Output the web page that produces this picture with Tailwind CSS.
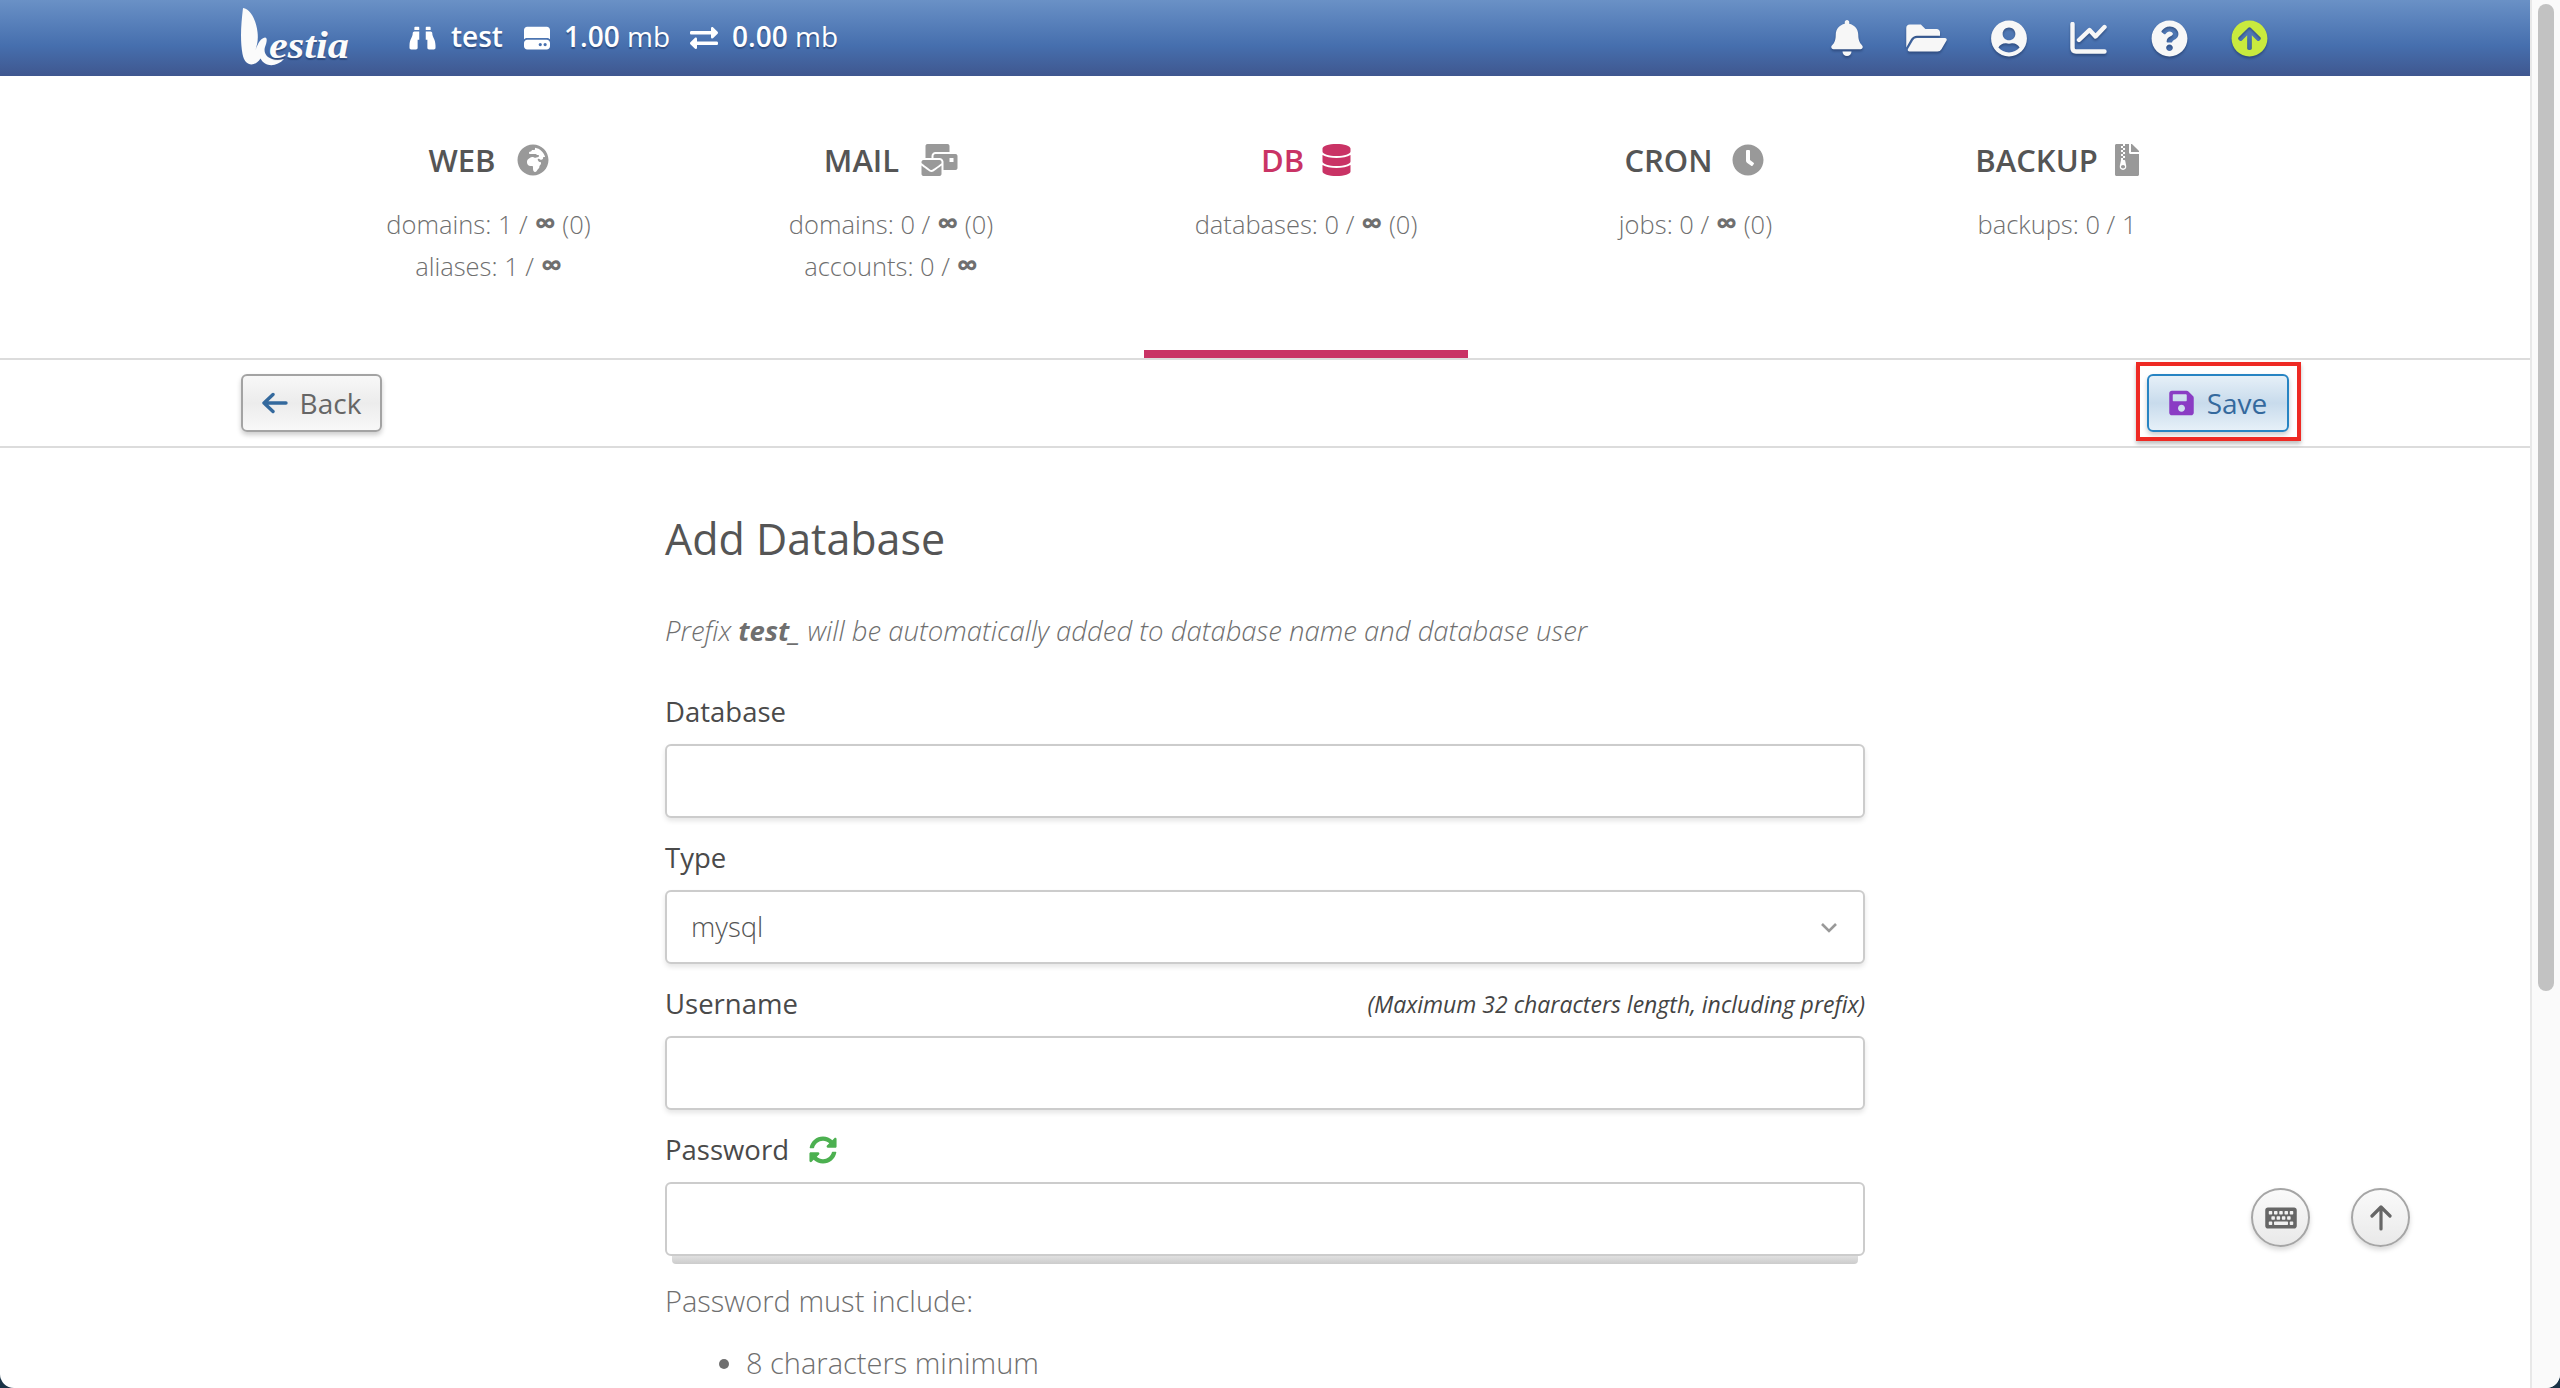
<!DOCTYPE html>
<html lang="en">
<head>
  <meta charset="UTF-8" />
  <title>Add Database</title>
  <script src="https://cdn.jsdelivr.net/npm/@tailwindcss/browser@4"></script>
</head>
<body class="h-screen overflow-hidden bg-[#1b3347] font-['Open_Sans',sans-serif] text-[#666]">
<div class="relative flex h-screen overflow-hidden rounded-b-[14px] bg-white">
  <div class="relative w-[2530px] shrink-0">

    <!-- Top bar -->
    <div class="h-[76px] bg-linear-to-b from-[#6a91c6] via-[#466fae] via-60% to-[#3f578f] flex items-center pl-[240px] pr-[262px] text-white [text-shadow:0_2px_1px_rgba(20,40,80,.45)]">
      <svg class="w-[112px] h-[76px] mr-[57px] shrink-0" viewBox="0 0 112 76">
        <path fill="#fbfbfb" d="M3 8C10 9 16 19 17.500 32C18.500 40 17 45 15.500 50C18 43 21 38 25 37.500C28 37.500 26.500 43 25 47C22.500 55 30 62 44 59C37 67 25 67.500 20.500 58.500C15 67 5 67 2.500 54C0 40 1 25 3 8Z"/>
        <text x="29" y="58" textLength="80" lengthAdjust="spacingAndGlyphs" fill="#fbfbfb" font-family="'Liberation Serif',serif" font-style="italic" font-weight="700" font-size="37">estia</text>
      </svg>
      <svg class="w-[27px] h-[26px] mr-[15px]" viewBox="0 0 512 512" fill="currentColor"><path d="M416 48c0-8.84-7.16-16-16-16h-64c-8.84 0-16 7.16-16 16v48h96V48zM63.91 159.99C61.4 253.84 3.46 274.22 0 404v44c0 17.67 14.33 32 32 32h96c17.67 0 32-14.33 32-32V288h32V128H95.84c-17.63 0-31.45 14.37-31.93 31.99zm384.18 0c-.48-17.62-14.3-31.99-31.93-31.99H320v160h32v160c0 17.67 14.33 32 32 32h96c17.67 0 32-14.33 32-32v-44c-3.46-129.78-61.4-150.16-63.91-244.01zM176 32h-64c-8.84 0-16 7.16-16 16v48h96V48c0-8.84-7.16-16-16-16z"/></svg>
      <span class="mb-[4px] text-[28px] font-semibold w-[72px]">test</span>
      <svg class="w-[28px] h-[26px] mr-[13px]" viewBox="0 0 512 512" fill="currentColor"><path d="M0 96C0 60.7 28.7 32 64 32H448c35.3 0 64 28.7 64 64V280.4c-17-15.2-39.4-24.4-64-24.4H64c-24.6 0-47 9.2-64 24.4V96zM64 288H448c35.3 0 64 28.7 64 64v64c0 35.3-28.7 64-64 64H64c-35.3 0-64-28.7-64-64V352c0-35.3 28.7-64 64-64zM320 416a32 32 0 1 0 0-64 32 32 0 1 0 0 64zm128-32a32 32 0 1 0 -64 0 32 32 0 1 0 64 0z"/></svg>
      <span class="mb-[4px] text-[28px] w-[126px]"><span class="font-semibold">1.00</span> <span>mb</span></span>
      <svg class="w-[28px] h-[28px] mr-[14px]" viewBox="0 0 512 512" fill="currentColor"><path d="M0 168v-16c0-13.255 10.745-24 24-24h360V80c0-21.367 25.899-32.042 40.971-16.971l80 80c9.372 9.373 9.372 24.569 0 33.941l-80 80C409.956 271.982 384 261.456 384 240v-48H24c-13.255 0-24-10.745-24-24zm488 152H128v-48c0-21.314-25.862-32.08-40.971-16.971l-80 80c-9.372 9.373-9.372 24.569 0 33.941l80 80C102.057 463.997 128 453.437 128 432v-48h360c13.255 0 24-10.745 24-24v-16c0-13.255-10.745-24-24-24z"/></svg>
      <span class="mb-[4px] text-[28px]"><span class="font-semibold">0.00</span> <span>mb</span></span>

      <div class="ml-auto flex items-center gap-[43.5px] text-[#f7f7f7] drop-shadow-[0_2px_1px_rgba(20,40,80,.45)]">
        <svg class="w-[32px] h-[36px]" viewBox="0 0 448 512" fill="currentColor"><path d="M224 512c35.32 0 63.97-28.65 63.97-64H160.03c0 35.35 28.65 64 63.97 64zm215.39-149.71c-19.32-20.76-55.47-51.99-55.47-154.29 0-77.7-54.48-139.9-127.94-155.16V32c0-17.67-14.32-32-31.98-32s-31.98 14.33-31.98 32v20.84C118.56 68.1 64.08 130.3 64.08 208c0 102.3-36.15 133.53-55.47 154.29-6 6.45-8.66 14.16-8.61 21.71.11 16.4 12.98 32 32.1 32h383.8c19.12 0 32-15.6 32.1-32 .05-7.55-2.61-15.27-8.61-21.71z"/></svg>
        <svg class="w-[41px] h-[36px]" viewBox="0 0 576 512" fill="currentColor"><path d="M572.694 292.093L500.27 416.248A63.997 63.997 0 0 1 444.989 448H45.025c-18.523 0-30.064-20.093-20.731-36.093l72.424-124.155A64 64 0 0 1 152 256h399.964c18.523 0 30.064 20.093 20.73 36.093zM152 224h328v-48c0-26.51-21.49-48-48-48H272l-64-64H48C21.49 64 0 85.49 0 112v278.046l69.077-118.418C86.214 242.25 117.989 224 152 224z"/></svg>
        <svg class="w-[36px] h-[37px]" viewBox="0 0 496 512" fill="currentColor"><path d="M248 8C111 8 0 119 0 256s111 248 248 248 248-111 248-248S385 8 248 8zm0 96c48.6 0 88 39.4 88 88s-39.4 88-88 88-88-39.4-88-88 39.4-88 88-88zm0 344c-58.7 0-111.3-26.6-146.5-68.2 18.8-35.4 55.6-59.8 98.5-59.8 2.4 0 4.8.4 7.1 1.1 13 4.2 26.6 6.9 40.9 6.9 14.3 0 28-2.7 40.9-6.9 2.3-.7 4.7-1.1 7.1-1.1 42.9 0 79.7 24.4 98.5 59.8C359.3 421.4 306.7 448 248 448z"/></svg>
        <svg class="w-[37px] h-[32px]" viewBox="0 0 37 32" fill="none" stroke="currentColor" stroke-width="4.4" stroke-linecap="round" stroke-linejoin="round"><path d="M2.5 2V26Q2.5 29.5 6 29.5H34.5"/><path d="M9 18L19.5 8L25.5 14.5L34.5 5"/></svg>
        <svg class="w-[37px] h-[37px]" viewBox="0 0 512 512" fill="currentColor"><path d="M504 256c0 136.997-111.043 248-248 248S8 392.997 8 256C8 119.083 119.043 8 256 8s248 111.083 248 248zM262.655 90c-54.497 0-89.255 22.957-116.549 63.758-3.536 5.286-2.353 12.415 2.715 16.258l34.699 26.31c5.205 3.947 12.621 3.008 16.665-2.122 17.864-22.658 30.113-35.797 57.303-35.797 20.429 0 45.698 13.148 45.698 32.958 0 14.976-12.363 22.667-32.534 33.976C247.128 238.528 216 254.941 216 296v4c0 6.627 5.373 12 12 12h56c6.627 0 12-5.373 12-12v-1.333c0-28.462 83.186-29.647 83.186-106.667 0-58.002-60.165-102-116.531-102zM256 338c-25.365 0-46 20.635-46 46 0 25.364 20.635 46 46 46s46-20.636 46-46c0-25.365-20.635-46-46-46z"/></svg>
        <svg class="w-[37px] h-[37px] text-[#c9ea3e]" viewBox="0 0 512 512" fill="currentColor"><path d="M8 256C8 119 119 8 256 8s248 111 248 248-111 248-248 248S8 393 8 256zm143.6 28.9l72.4-75.5V392c0 13.3 10.7 24 24 24h16c13.3 0 24-10.7 24-24V209.4l72.4 75.5c9.3 9.7 24.8 9.9 34.3.4l10.9-11c9.4-9.4 9.4-24.6 0-33.9L273 107.7c-9.4-9.4-24.6-9.4-33.9 0L106.3 240.4c-9.4 9.4-9.4 24.6 0 33.9l10.9 11c9.6 9.5 25.1 9.3 34.4-.4z"/></svg>
      </div>
    </div>

    <!-- Tabs -->
    <div class="h-[284px] border-b-2 border-[#dcdcdc] flex pl-[339px] text-center text-[25.500px] font-light leading-[42px] text-[#6f6f6f]">
      <div class="w-[299px] pt-[68px]">
        <div class="h-[32px] flex items-center justify-center gap-[21px] text-[31px] font-semibold text-[#555]">WEB
          <svg class="w-[32px] h-[32px] text-[#999]" viewBox="0 0 496 512" fill="currentColor"><path d="M248 8C111.03 8 0 119.03 0 256s111.03 248 248 248 248-111.03 248-248S384.97 8 248 8zm160 215.5v6.93c0 5.87-3.32 11.24-8.57 13.86l-15.39 7.7a15.485 15.485 0 0 1-15.53-.97l-18.21-12.14a15.52 15.52 0 0 0-13.5-1.81l-2.65.88c-9.7 3.23-13.66 14.79-7.99 23.3l13.24 19.86c2.87 4.31 7.71 6.9 12.89 6.9h8.21c8.56 0 15.5 6.94 15.5 15.5v11.34c0 3.35-1.09 6.62-3.1 9.3l-18.74 24.98c-1.42 1.9-2.39 4.1-2.83 6.43l-4.3 22.83c-.62 3.29-2.29 6.29-4.76 8.56a159.608 159.608 0 0 0-25 29.16l-13.03 19.55a27.756 27.756 0 0 1-23.09 12.36c-10.51 0-20.12-5.94-24.82-15.34a78.902 78.902 0 0 1-8.33-35.29V367.5c0-8.56-6.94-15.5-15.5-15.5h-25.88c-14.49 0-28.38-5.76-38.63-16a54.659 54.659 0 0 1-16-38.63v-14.06c0-17.19 8.1-33.38 21.85-43.7l27.58-20.69a54.663 54.663 0 0 1 32.78-10.93h.89c8.48 0 16.85 1.97 24.43 5.77l14.72 7.36c3.68 1.84 7.93 2.14 11.83.84l47.31-15.77c6.33-2.11 10.6-8.03 10.6-14.7 0-8.56-6.94-15.5-15.5-15.5h-10.09c-4.11 0-8.05-1.63-10.96-4.54l-6.92-6.92a15.493 15.493 0 0 0-10.96-4.54H199.5c-8.56 0-15.5-6.94-15.5-15.5v-4.4c0-7.11 4.84-13.31 11.74-15.04l14.45-3.61c3.74-.94 7-3.23 9.14-6.44l8.08-12.11c2.87-4.31 7.71-6.9 12.89-6.9h24.21c8.56 0 15.5-6.94 15.5-15.5v-21.7C359.23 71.63 422.86 131.02 441.93 208H423.5c-8.56 0-15.5 6.94-15.5 15.5z"/></svg>
        </div>
        <p class="mt-[27px]">domains: 1 / <b class="font-bold text-[30px] leading-[30px]">∞</b> (0)</p>
        <p>aliases: 1 / <b class="font-bold text-[30px] leading-[30px]">∞</b></p>
      </div>
      <div class="w-[306px] ml-[100px] pt-[68px]">
        <div class="h-[32px] flex items-center justify-center gap-[22px] text-[31px] font-semibold text-[#555]">MAIL
          <svg class="w-[37px] h-[32px] text-[#999]" viewBox="0 0 576 512" fill="currentColor"><path d="M160 448c-25.6 0-51.2-22.4-64-32-64-44.8-83.2-60.8-96-70.4V480c0 17.67 14.33 32 32 32h256c17.67 0 32-14.33 32-32V345.6c-12.8 9.6-32 25.6-96 70.4-12.8 9.6-38.4 32-64 32zm128-192H32c-17.67 0-32 14.33-32 32v16c25.6 19.2 22.4 19.2 115.2 86.4 9.6 6.4 28.8 25.6 44.8 25.6s35.2-19.2 44.8-22.4c92.8-67.2 89.6-67.2 115.2-86.4V288c0-17.67-14.33-32-32-32zm256-96H224c-17.67 0-32 14.33-32 32v32h96c33.21 0 60.59 25.42 63.71 57.82l.29-.22V416h192c17.67 0 32-14.33 32-32V192c0-17.67-14.33-32-32-32zm-32 128h-64v-64h64v64zm-352-96c0-35.29 28.71-64 64-64h224V32c0-17.67-14.33-32-32-32H96C78.33 0 64 14.33 64 32v192h96v-32z"/></svg>
        </div>
        <p class="mt-[27px]">domains: 0 / <b class="font-bold text-[30px] leading-[30px]">∞</b> (0)</p>
        <p>accounts: 0 / <b class="font-bold text-[30px] leading-[30px]">∞</b></p>
      </div>
      <div class="w-[324px] ml-[100px] pt-[68px] h-[282px] border-b-[8px] border-[#c93365]">
        <div class="h-[32px] flex items-center justify-center gap-[18px] text-[31px] font-semibold text-[#c93365]">DB
          <svg class="w-[29px] h-[32px]" viewBox="0 0 448 512" fill="currentColor"><path d="M448 73.143v45.714C448 159.143 347.667 192 224 192S0 159.143 0 118.857V73.143C0 32.857 100.333 0 224 0s224 32.857 224 73.143zM448 176v102.857C448 319.143 347.667 352 224 352S0 319.143 0 278.857V176c48.125 33.143 136.208 48.572 224 48.572S399.874 209.143 448 176zm0 160v102.857C448 479.143 347.667 512 224 512S0 479.143 0 438.857V336c48.125 33.143 136.208 48.572 224 48.572S399.874 369.143 448 336z"/></svg>
        </div>
        <p class="mt-[27px]">databases: 0 / <b class="font-bold text-[30px] leading-[30px]">∞</b> (0)</p>
      </div>
      <div class="w-[255px] ml-[100px] pt-[68px]">
        <div class="h-[32px] flex items-center justify-center gap-[19px] text-[31px] font-semibold text-[#555] pr-[3px]">CRON
          <svg class="w-[32px] h-[32px] text-[#999]" viewBox="0 0 512 512" fill="currentColor"><path d="M256,8C119,8,8,119,8,256S119,504,256,504,504,393,504,256,393,8,256,8Zm92.49,313h0l-20,25a16,16,0,0,1-22.49,2.5h0l-67-49.72a40,40,0,0,1-15-31.23V112a16,16,0,0,1,16-16h32a16,16,0,0,1,16,16V256l58,42.5A16,16,0,0,1,348.49,321Z"/></svg>
        </div>
        <p class="mt-[27px]">jobs: 0 / <b class="font-bold text-[30px] leading-[30px]">∞</b> (0)</p>
      </div>
      <div class="w-[250px] ml-[109px] pt-[68px]">
        <div class="h-[32px] flex items-center justify-center gap-[17px] text-[31px] font-semibold text-[#555]">BACKUP
          <svg class="w-[24px] h-[32px] text-[#999]" viewBox="0 0 384 512" fill="currentColor"><path d="M377 105L279.1 7c-4.5-4.5-10.6-7-17-7H256v128h128v-6.1c0-6.3-2.5-12.4-7-16.9zM128.4 336c-17.9 0-32.4 12.1-32.4 27 0 15 14.6 27 32.5 27s32.4-12.1 32.4-27-14.6-27-32.5-27zM224 136V0h-63.6v32h-32V0H24C10.7 0 0 10.7 0 24v464c0 13.3 10.7 24 24 24h336c13.3 0 24-10.7 24-24V160H248c-13.2 0-24-10.8-24-24zM95.9 32h32v32h-32zm32.3 384c-33.2 0-58-30.4-51.4-62.9L96.4 256v-32h32v-32h-32v-32h32v-32h-32V96h32V64h32v32h-32v32h32v32h-32v32h32v32h-32v32h22.1c5.7 0 10.7 4.1 11.8 9.7l17.3 87.7c6.4 32.4-18.4 62.6-51.4 62.6z"/></svg>
        </div>
        <p class="mt-[27px]">backups: 0 / 1</p>
      </div>
    </div>

    <!-- Toolbar -->
    <div class="h-[88px] border-b-2 border-[#dcdcdc] flex items-center justify-between pl-[241px] pr-[241px] text-[28px]">
      <button class="h-[58px] w-[141px] flex items-center justify-center gap-[12px] rounded-[6px] border-2 border-[#a3a3a3] bg-linear-to-b from-[#f8f8f8] via-[#ececec] to-[#f8f8f8] shadow-[0_3px_5px_rgba(0,0,0,.2)] text-[#666] leading-[50px]">
        <svg class="w-[26px] h-[22px] text-[#34699d]" viewBox="0 0 26 22" fill="none" stroke="currentColor" stroke-width="3.4" stroke-linecap="round" stroke-linejoin="round"><path d="M2 11H24M11 2.5L2 11L11 19.5"/></svg>
        Back
      </button>
      <div class="relative">
        <button class="h-[58px] w-[142px] flex items-center justify-center gap-[13px] rounded-[6px] border-2 border-[#2784c3] bg-linear-to-b from-[#e6f0f8] via-[#c8dbec] to-[#e6f0f8] shadow-[0_3px_5px_rgba(0,0,0,.2)] text-[#34699d] leading-[50px]">
          <svg class="w-[25px] h-[28px] text-[#8a3cc4]" viewBox="0 0 448 512" fill="currentColor"><path d="M433.941 129.941l-83.882-83.882A48 48 0 0 0 316.118 32H48C21.49 32 0 53.49 0 80v352c0 26.51 21.49 48 48 48h352c26.51 0 48-21.49 48-48V163.882a48 48 0 0 0-14.059-33.941zM224 416c-35.346 0-64-28.654-64-64 0-35.346 28.654-64 64-64s64 28.654 64 64c0 35.346-28.654 64-64 64zm96-304.52V212c0 6.627-5.373 12-12 12H76c-6.627 0-12-5.373-12-12V108c0-6.627 5.373-12 12-12h228.52c3.183 0 6.235 1.264 8.485 3.515l3.48 3.48A11.996 11.996 0 0 1 320 111.48z"/></svg>
          Save
        </button>
        <div class="absolute left-[-11px] right-[-12px] top-[-12px] bottom-[-9px] border-4 border-[#ee2a24] shadow-[0_3px_4px_rgba(0,0,0,.25)]"></div>
      </div>
    </div>

    <!-- Form -->
    <div class="ml-[665px] w-[1200px] text-[27.5px]">
      <h1 class="mt-[63px] h-[56px] leading-[56px] text-[43px] font-normal text-[#555]">Add Database</h1>
      <p class="mt-[44px] h-[40px] leading-[40px] italic font-light text-[#6f6f6f]">Prefix <b class="font-bold">test_</b> will be automatically added to database name and database user</p>

      <label class="mt-[45px] h-[32px] leading-[32px] block font-medium text-[#4a4a4a]">Database</label>
      <input class="mt-[16px] block w-full h-[74px] rounded-[6px] border-2 border-[#ccc] bg-white shadow-[0_3px_5px_rgba(0,0,0,.1)]" />

      <label class="mt-[24px] h-[32px] leading-[32px] block font-medium text-[#4a4a4a]">Type</label>
      <div class="relative mt-[16px]">
        <select class="appearance-none block w-full h-[74px] pl-[24px] rounded-[6px] border-2 border-[#ccc] bg-white shadow-[0_3px_5px_rgba(0,0,0,.1)] font-light text-[#555]"><option>mysql</option></select>
        <svg class="absolute right-[28px] top-[33px] w-[16px] h-[10px] text-[#999]" viewBox="0 0 16 10" fill="none" stroke="currentColor" stroke-width="2.6"><path d="M1 1L8 8L15 1"/></svg>
      </div>

      <div class="mt-[24px] h-[32px] flex items-center justify-between">
        <label class="font-medium text-[#4a4a4a]">Username</label>
        <span class="text-[23px] italic font-medium text-[#444]">(Maximum 32 characters length, including prefix)</span>
      </div>
      <input class="mt-[16px] block w-full h-[74px] rounded-[6px] border-2 border-[#ccc] bg-white shadow-[0_3px_5px_rgba(0,0,0,.1)]" />

      <div class="mt-[24px] h-[32px] flex items-center gap-[20px]">
        <label class="font-medium text-[#4a4a4a]">Password</label>
        <svg class="w-[28px] h-[28px] text-[#4cb050]" viewBox="0 0 512 512" fill="currentColor"><path d="M370.72 133.28C339.458 104.008 298.888 87.962 255.848 88c-77.458.068-144.328 53.178-162.791 126.85-1.344 5.363-6.122 9.15-11.651 9.15H24.103c-7.498 0-13.194-6.807-11.807-14.176C33.933 94.924 134.813 8 256 8c66.448 0 126.791 26.136 171.315 68.685L463.03 40.97C478.149 25.851 504 36.559 504 57.941V192c0 13.255-10.745 24-24 24H345.941c-21.382 0-32.09-25.851-16.971-40.971l41.75-41.749zM32 296h134.059c21.382 0 32.09 25.851 16.971 40.971l-41.75 41.75c31.262 29.273 71.835 45.319 114.876 45.28 77.418-.07 144.315-53.144 162.787-126.849 1.344-5.363 6.122-9.15 11.651-9.15h57.304c7.498 0 13.194 6.807 11.807 14.176C478.067 417.076 377.187 504 256 504c-66.448 0-126.791-26.136-171.315-68.685L48.97 471.03C33.851 486.149 8 475.441 8 454.059V320c0-13.255 10.745-24 24-24z"/></svg>
      </div>
      <div class="relative mt-[16px]">
        <input class="relative z-10 block w-full h-[74px] rounded-[6px] border-2 border-[#ccc] bg-white" />
        <div class="mx-[7px] h-[8px] bg-linear-to-b from-[#e0e0e0] to-[#cccccc] rounded-b-[4px]"></div>
      </div>

      <p class="mt-[17px] h-[40px] leading-[40px] text-[29px] font-light text-[#6f6f6f]">Password must include:</p>
      <ul class="mt-[22px] pl-[81px] list-disc text-[29px] font-light text-[#6f6f6f] leading-[40px]">
        <li>8 characters minimum</li>
      </ul>
    </div>

    <!-- Floating buttons -->
    <button class="absolute left-[2251px] top-[1188px] w-[59px] h-[59px] rounded-full border-2 border-[#a5a5a5] bg-linear-to-b from-[#fafafa] to-[#e9e9e9] shadow-[0_3px_5px_rgba(0,0,0,.15)] flex items-center justify-center">
      <svg class="w-[32px] h-[28px] text-[#666]" viewBox="0 0 576 512" fill="currentColor"><path d="M528 448H48c-26.51 0-48-21.49-48-48V112c0-26.51 21.49-48 48-48h480c26.51 0 48 21.49 48 48v288c0 26.51-21.49 48-48 48zM128 180v-40c0-6.627-5.373-12-12-12H76c-6.627 0-12 5.373-12 12v40c0 6.627 5.373 12 12 12h40c6.627 0 12-5.373 12-12zm96 0v-40c0-6.627-5.373-12-12-12h-40c-6.627 0-12 5.373-12 12v40c0 6.627 5.373 12 12 12h40c6.627 0 12-5.373 12-12zm96 0v-40c0-6.627-5.373-12-12-12h-40c-6.627 0-12 5.373-12 12v40c0 6.627 5.373 12 12 12h40c6.627 0 12-5.373 12-12zm96 0v-40c0-6.627-5.373-12-12-12h-40c-6.627 0-12 5.373-12 12v40c0 6.627 5.373 12 12 12h40c6.627 0 12-5.373 12-12zm96 0v-40c0-6.627-5.373-12-12-12h-40c-6.627 0-12 5.373-12 12v40c0 6.627 5.373 12 12 12h40c6.627 0 12-5.373 12-12zm-336 96v-40c0-6.627-5.373-12-12-12h-40c-6.627 0-12 5.373-12 12v40c0 6.627 5.373 12 12 12h40c6.627 0 12-5.373 12-12zm96 0v-40c0-6.627-5.373-12-12-12h-40c-6.627 0-12 5.373-12 12v40c0 6.627 5.373 12 12 12h40c6.627 0 12-5.373 12-12zm96 0v-40c0-6.627-5.373-12-12-12h-40c-6.627 0-12 5.373-12 12v40c0 6.627 5.373 12 12 12h40c6.627 0 12-5.373 12-12zm96 0v-40c0-6.627-5.373-12-12-12h-40c-6.627 0-12 5.373-12 12v40c0 6.627 5.373 12 12 12h40c6.627 0 12-5.373 12-12zm-336 96v-40c0-6.627-5.373-12-12-12H76c-6.627 0-12 5.373-12 12v40c0 6.627 5.373 12 12 12h40c6.627 0 12-5.373 12-12zm288 0v-40c0-6.627-5.373-12-12-12H172c-6.627 0-12 5.373-12 12v40c0 6.627 5.373 12 12 12h232c6.627 0 12-5.373 12-12zm96 0v-40c0-6.627-5.373-12-12-12h-40c-6.627 0-12 5.373-12 12v40c0 6.627 5.373 12 12 12h40c6.627 0 12-5.373 12-12z"/></svg>
    </button>
    <button class="absolute left-[2351px] top-[1188px] w-[59px] h-[59px] rounded-full border-2 border-[#a5a5a5] bg-linear-to-b from-[#fafafa] to-[#e9e9e9] shadow-[0_3px_5px_rgba(0,0,0,.15)] flex items-center justify-center">
      <svg class="w-[22px] h-[26px] text-[#666]" viewBox="0 0 22 26" fill="none" stroke="currentColor" stroke-width="3.2" stroke-linecap="round" stroke-linejoin="round"><path d="M11 24V2M2 11L11 2L20 11"/></svg>
    </button>
  </div>

  <!-- Scrollbar -->
  <div class="flex-1 bg-[#fafafa] border-l-2 border-[#e8e8e8] pt-[4px] pl-[6px]">
    <div class="w-[16px] h-[987px] rounded-full bg-[#c2c2c2]"></div>
  </div>
</div>
</body>
</html>
